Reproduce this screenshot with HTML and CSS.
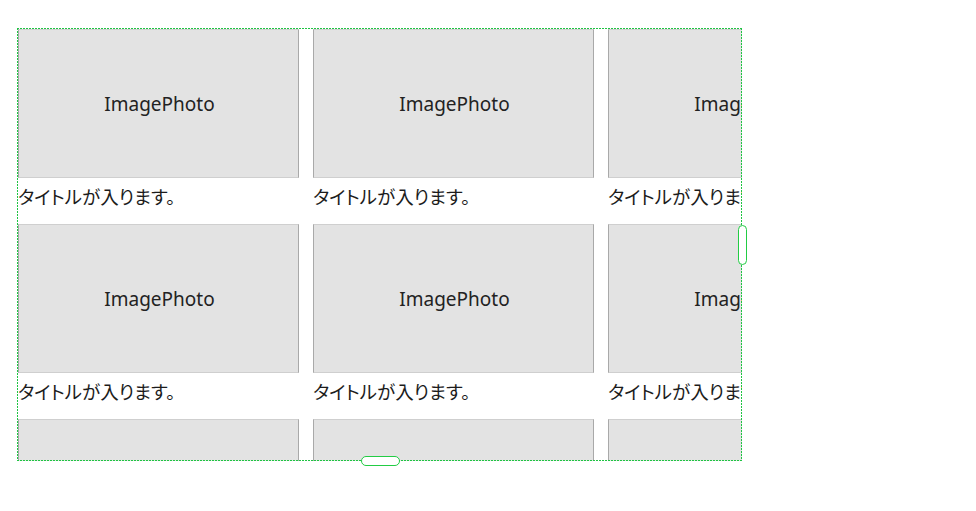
FILE: index.html
```html
<!DOCTYPE html>
<html lang="ja">
<head>
<meta charset="utf-8">
<title>Grid</title>
<link rel="stylesheet" href="styles.css">
</head>
<body>
<div class="frame">
  <div class="viewport">
    <div class="grid">
      <div class="card"><div class="photo">ImagePhoto</div><div class="title">タイトルが入ります。</div></div>
      <div class="card"><div class="photo">ImagePhoto</div><div class="title">タイトルが入ります。</div></div>
      <div class="card"><div class="photo">ImagePhoto</div><div class="title">タイトルが入ります。</div></div>
      <div class="card"><div class="photo">ImagePhoto</div><div class="title">タイトルが入ります。</div></div>
      <div class="card"><div class="photo">ImagePhoto</div><div class="title">タイトルが入ります。</div></div>
      <div class="card"><div class="photo">ImagePhoto</div><div class="title">タイトルが入ります。</div></div>
      <div class="card"><div class="photo">ImagePhoto</div><div class="title">タイトルが入ります。</div></div>
      <div class="card"><div class="photo">ImagePhoto</div><div class="title">タイトルが入ります。</div></div>
      <div class="card"><div class="photo">ImagePhoto</div><div class="title">タイトルが入ります。</div></div>
    </div>
  </div>
  <div class="outline"></div>
  <div class="handle handle-right"></div>
  <div class="handle handle-bottom"></div>
</div>
</body>
</html>
```
FILE: styles.css
```css
html, body {
  margin: 0;
  padding: 0;
  background: #ffffff;
}
body {
  font-family: "Noto Sans", "Noto Sans CJK JP", sans-serif;
  color: #1c1c1c;
  min-height: 511px;
}
.frame {
  position: relative;
  margin: 29px 0 0 18px;
  width: 724px;
  height: 432px;
}
.viewport {
  width: 100%;
  height: 100%;
  overflow: hidden;
}
.grid {
  display: grid;
  grid-template-columns: repeat(3, 281px);
  column-gap: 14px;
  row-gap: 15px;
}
.card {
  display: flex;
  flex-direction: column;
}
.photo {
  box-sizing: border-box;
  height: 149px;
  background: #e3e3e3;
  border-left: 1px solid #a9a9a9;
  border-right: 1px solid #a9a9a9;
  border-top: 1px solid #cfcfcf;
  border-bottom: 1px solid #cfcfcf;
  display: flex;
  align-items: center;
  justify-content: center;
  font-family: "Noto Sans", sans-serif;
  font-size: 19px;
  color: #222222;
  padding-left: 2px;
}
.title {
  padding-top: 5px;
  font-family: "Noto Sans CJK JP", sans-serif;
  font-size: 18.5px;
  line-height: 26px;
  font-feature-settings: "palt";
  color: #1c1c1c;
  white-space: nowrap;
}
.outline {
  position: absolute;
  z-index: 1;
  left: -1px;
  top: -1px;
  right: 0;
  bottom: 0;
  pointer-events: none;
  background:
    repeating-linear-gradient(90deg, #1fc443 0 2px, transparent 2px 3px) left top / 100% 1px no-repeat,
    repeating-linear-gradient(90deg, #1fc443 0 2px, transparent 2px 3px) left bottom / 100% 1px no-repeat,
    repeating-linear-gradient(180deg, #1fc443 0 2px, transparent 2px 3px) left top / 1px 100% no-repeat,
    repeating-linear-gradient(180deg, #1fc443 0 2px, transparent 2px 3px) right top / 1px 100% no-repeat;
}
.handle {
  position: absolute;
  z-index: 2;
  box-sizing: border-box;
  background: #ffffff;
  border: 1.5px solid #22cc44;
  border-radius: 5px;
}
.handle-right {
  left: 720px;
  top: 196px;
  width: 9px;
  height: 40px;
}
.handle-bottom {
  left: 343px;
  top: 427px;
  width: 39px;
  height: 10px;
}
```
